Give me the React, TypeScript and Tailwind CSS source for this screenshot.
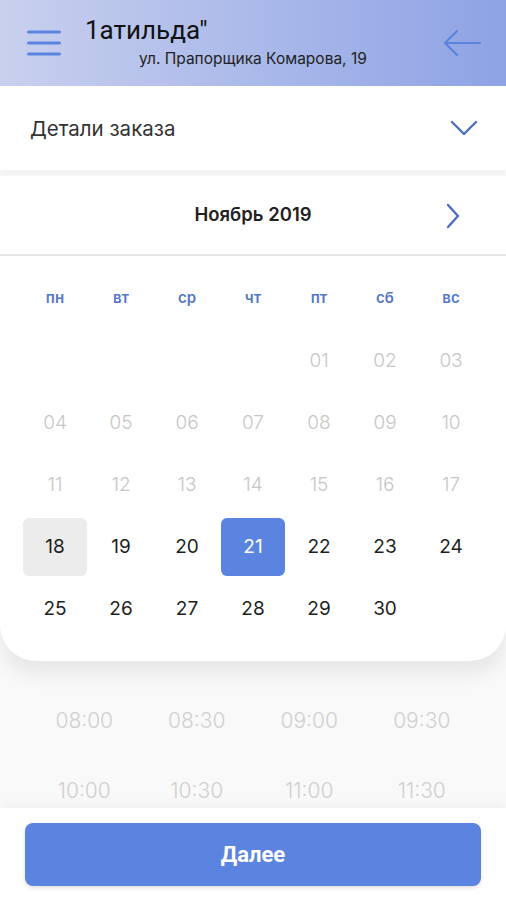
import React from "react";

const BLUE = "#5b84e0";

function Hamburger() {
  return (
    <svg width="34" height="28" viewBox="0 0 34 28" fill="none">
      <path d="M1.5 3h31M1.5 14h31M1.5 25h31" stroke={BLUE} strokeWidth="3" strokeLinecap="round" />
    </svg>
  );
}

function BackArrow() {
  return (
    <svg width="40" height="28" viewBox="0 0 40 28" fill="none">
      <path d="M38 14H3M15 2L3 14l12 12" stroke={BLUE} strokeWidth="2.2" strokeLinecap="round" strokeLinejoin="round" />
    </svg>
  );
}

function ChevronDown() {
  return (
    <svg width="28" height="16" viewBox="0 0 28 16" fill="none">
      <path d="M2 2l12 12L26 2" stroke="#4e6fbf" strokeWidth="2.4" strokeLinecap="round" strokeLinejoin="round" />
    </svg>
  );
}

function ChevronRight() {
  return (
    <svg width="14" height="26" viewBox="0 0 14 26" fill="none">
      <path d="M2 2l10 11L2 24" stroke="#4e6fbf" strokeWidth="2.4" strokeLinecap="round" strokeLinejoin="round" />
    </svg>
  );
}

const weekdays = ["пн", "вт", "ср", "чт", "пт", "сб", "вс"];

type Cell = { d: string; kind: "empty" | "past" | "day" | "today" | "selected" };

const cells: Cell[] = [
  ...Array.from({ length: 4 }, () => ({ d: "", kind: "empty" as const })),
  ...Array.from({ length: 17 }, (_, i) => ({ d: String(i + 1).padStart(2, "0"), kind: "past" as const })),
  ...Array.from({ length: 13 }, (_, i) => {
    const n = i + 18;
    return {
      d: String(n),
      kind: (n === 18 ? "today" : n === 21 ? "selected" : "day") as Cell["kind"],
    };
  }),
];

const times = ["08:00", "08:30", "09:00", "09:30", "10:00", "10:30", "11:00", "11:30"];

export default function App() {
  return (
    <div
      className="relative w-[506px] h-[900px] overflow-hidden bg-[#f9f9f9]"
      style={{ fontFamily: "Inter, 'Open Sans', sans-serif" }}
    >
      {/* Header */}
      <div className="h-[86px] bg-gradient-to-r from-[#c9d0ee] to-[#8ea3e5] flex items-start pl-[27px] pr-[24px]">
        <div className="mt-[29px]">
          <Hamburger />
        </div>
        <div className="ml-[24px] mt-[13px] flex-1">
          <div className="text-[26px] leading-[34px] text-[#111]" style={{ fontFamily: "Roboto, Arial, sans-serif" }}>1атильда"</div>
          <div className="ml-[54px] mt-[3px] text-[15.5px] leading-[18px] text-[#222]">ул. Прапорщика Комарова, 19</div>
        </div>
        <div className="mt-[29px]">
          <BackArrow />
        </div>
      </div>

      {/* Order details */}
      <div className="h-[84px] bg-white flex items-center pl-[30px] pr-[28px] shadow-[0_4px_6px_rgba(0,0,0,0.03)]">
        <div className="flex-1 text-[20.5px] text-[#333] pt-[2px]">
          Детали заказа
        </div>
        <ChevronDown />
      </div>

      {/* Calendar card */}
      <div className="mt-[6px] bg-white rounded-b-[36px] shadow-[0_14px_18px_rgba(0,0,0,0.07)]">
        <div className="h-[80px] flex items-center justify-center relative border-b-[2px] border-[#e6e6e6]">
          <div className="text-[18.5px] font-semibold text-[#222]">Ноябрь 2019</div>
          <div className="absolute right-[46px] top-[27px]">
            <ChevronRight />
          </div>
        </div>
        <div className="px-[22px] pt-[29px] pb-[23px]">
          <div className="grid grid-cols-7">
            {weekdays.map((w) => (
              <div key={w} className="h-[26px] flex items-center justify-center text-[15px] font-semibold text-[#5477c8]">
                {w}
              </div>
            ))}
          </div>
          <div className="grid grid-cols-7 gap-y-[4px] mt-[21px]">
            {cells.map((c, i) => {
              let cls = "h-[58px] flex items-center justify-center text-[19px] rounded-[6px] ";
              if (c.kind === "past") cls += "text-[#c6c6c6] font-light";
              else if (c.kind === "day") cls += "text-[#1e1e1e]";
              else if (c.kind === "today") cls += "text-[#1e1e1e] bg-[#ececec] mx-[1px]";
              else if (c.kind === "selected") cls += "text-white bg-[#5b84e0] mx-[1px]";
              return (
                <div key={i} className={cls}>
                  {c.d}
                </div>
              );
            })}
          </div>
        </div>
      </div>

      {/* Times */}
      <div className="grid grid-cols-4 px-[28px] pt-[48px] gap-y-[46px]">
        {times.map((t) => (
          <div key={t} className="h-[24px] flex items-center justify-center text-[21px] font-light text-[#d0d0d0]">
            {t}
          </div>
        ))}
      </div>

      {/* Bottom bar */}
      <div className="absolute left-0 right-0 bottom-0 h-[92px] bg-white shadow-[0_-4px_10px_rgba(0,0,0,0.04)] px-[25px] pt-[15px]">
        <button
          className="w-full h-[63px] rounded-[8px] bg-[#5b84e0] text-white text-[22px] font-bold shadow-[0_2px_4px_rgba(0,0,0,0.12)]"
          style={{ fontFamily: "Roboto, Arial, sans-serif" }}
        >
          Далее
        </button>
      </div>
    </div>
  );
}
